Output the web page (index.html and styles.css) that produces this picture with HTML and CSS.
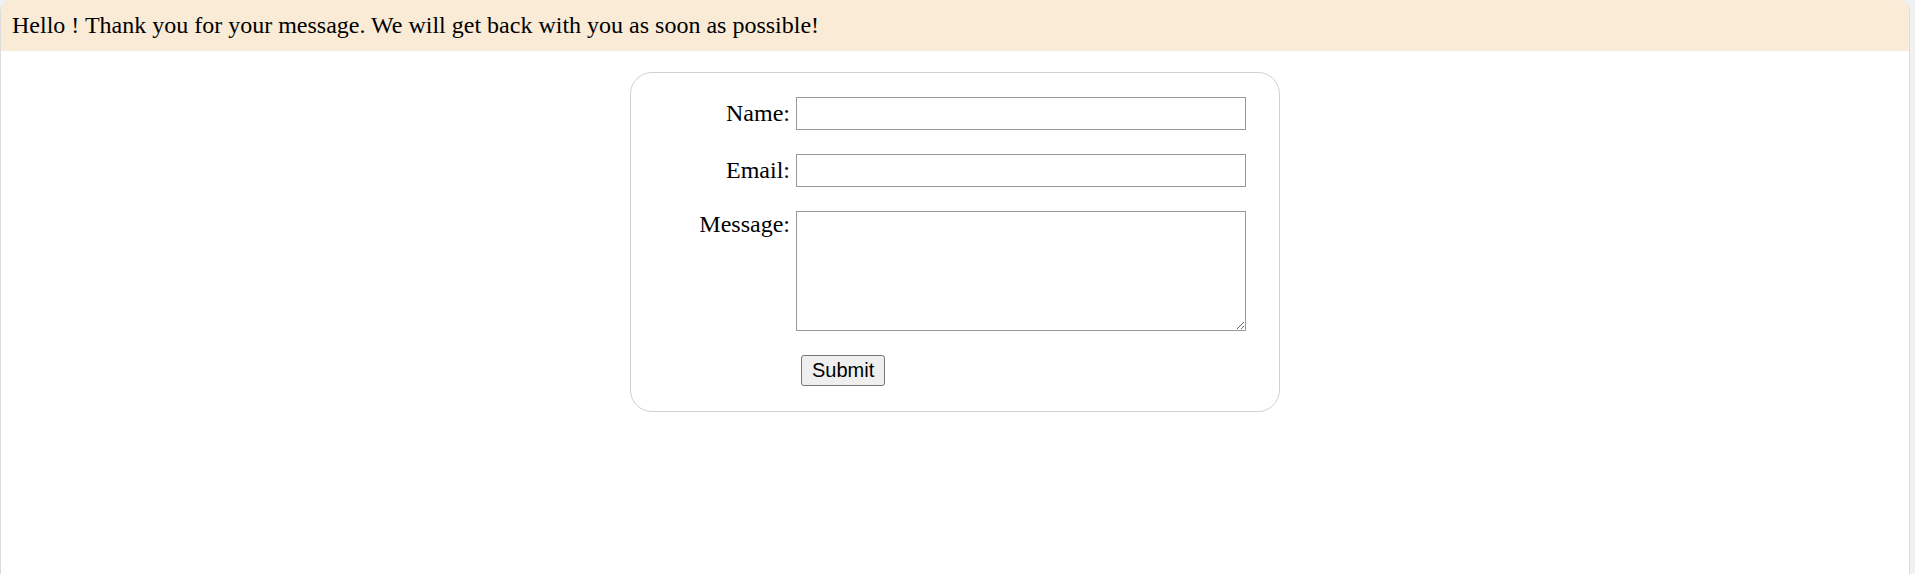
FILE: index.html
```html
<!DOCTYPE html>
<html lang="en">
<head>
<meta charset="utf-8">
<title>Contact</title>
<link rel="stylesheet" href="styles.css">
</head>
<body>
<div class="page">
  <div class="banner">Hello ! Thank you for your message. We will get back with you as soon as possible!</div>
  <form class="card">
    <div class="row">
      <label class="label" for="name">Name:</label>
      <input class="field" id="name" type="text">
    </div>
    <div class="row">
      <label class="label" for="email">Email:</label>
      <input class="field" id="email" type="text">
    </div>
    <div class="row">
      <label class="label label-top" for="msg">Message:</label>
      <textarea class="field area" id="msg"></textarea>
    </div>
    <div class="row">
      <span class="label"></span>
      <button class="submit" type="button">Submit</button>
    </div>
  </form>
</div>
</body>
</html>
```
FILE: styles.css
```css
html, body {
  margin: 0;
  padding: 0;
}
body {
  background: #f1f1f1;
  font-family: "Liberation Serif", "Times New Roman", serif;
  color: #000;
}
.page {
  width: 1910px;
  min-height: 100vh;
  box-sizing: border-box;
  background: #fff;
  border-left: 1px solid #dcdcdc;
  border-right: 1px solid #dcdcdc;
  border-radius: 12px 12px 0 0;
  overflow: hidden;
  display: flex;
  flex-direction: column;
  align-items: center;
}
.banner {
  align-self: stretch;
  background: #faebd7;
  font-size: 24px;
  line-height: 27px;
  padding: 12px 11px 12px 11px;
}
.card {
  margin-top: 21px;
  width: 650px;
  box-sizing: border-box;
  border: 1px solid #d0d0d0;
  border-radius: 22px;
  padding: 24px 32px 25px 0;
  display: flex;
  flex-direction: column;
  gap: 24px;
}
.row {
  display: flex;
  align-items: flex-start;
  gap: 6px;
}
.label {
  width: 159px;
  flex: none;
  text-align: right;
  font-size: 24px;
  line-height: 33px;
}
.label-top {
  line-height: 27px;
}
.field {
  width: 450px;
  height: 33px;
  box-sizing: border-box;
  border: 1px solid #999;
  margin: 0;
  padding: 2px 4px;
  font-family: "Liberation Sans", Arial, sans-serif;
  font-size: 16px;
  background: #fff;
}
.area {
  height: 120px;
}
.submit {
  margin-left: 5px;
  height: 31px;
  padding: 0 10px;
  font-family: "Liberation Sans", Arial, sans-serif;
  font-size: 20px;
  color: #000;
  background: #efefef;
  border: 1px solid #767676;
  border-radius: 3px;
}
```
